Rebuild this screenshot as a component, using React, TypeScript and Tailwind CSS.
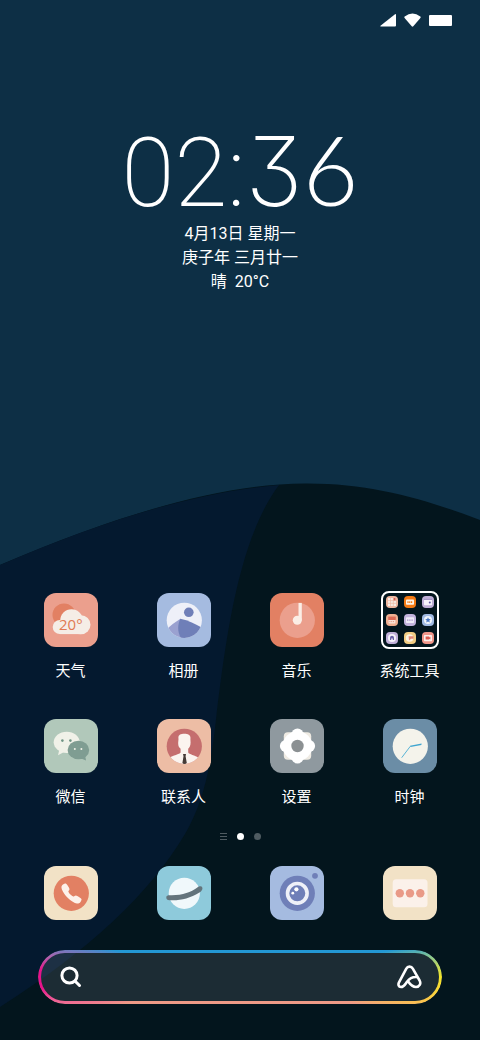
import React from "react";
import { IoCall } from "react-icons/io5";

type AppItem = {
   key: string;
   label: string;
   tile: string;
   art: React.ReactNode;
};

type MiniItem = {
   key: string;
   tile: string;
   art: React.ReactNode;
};

const WeatherArt = () => (
   <>
      <circle cx="20" cy="22" r="11.5" fill="#e28063" />
      <g fill="#f5ede6">
         <circle cx="27.5" cy="27.5" r="11.3" />
         <circle cx="37" cy="31.7" r="9.5" />
         <circle cx="15.8" cy="34" r="7.1" />
         <rect x="15.8" y="30" width="21.2" height="11.1" />
      </g>
      <text x="15" y="36.5" fontSize="15" fontWeight="500" fill="#e07a52" fontFamily="'Open Sans', sans-serif">
         20°
      </text>
   </>
);

const PhotosArt = () => (
   <>
      <clipPath id="photo-clip">
         <circle cx="27.3" cy="27.3" r="17.6" />
      </clipPath>
      <g clipPath="url(#photo-clip)">
         <rect width="54" height="54" fill="#eef0f8" />
         <circle cx="31.8" cy="19.3" r="4.8" fill="#6f7fb8" />
         <path d="M8 38C13 33 18 29 23.5 25.7L27 46L8 47Z" fill="#9aa1d0" />
         <path d="M23.3 25.7C32 27.5 39 31 46 35.5V47H25C20.5 40 20 33 23.3 25.7Z" fill="#6f7fb8" />
      </g>
   </>
);

const MusicArt = () => (
   <>
      <circle cx="27.3" cy="27.3" r="17.6" fill="#eb9f8d" />
      <circle cx="27.3" cy="27.3" r="4.5" fill="#fbeee6" />
      <rect x="28.5" y="9.9" width="3.3" height="17.4" fill="#fbeee6" />
   </>
);

const WechatArt = () => (
   <>
      <ellipse cx="22.7" cy="23.3" rx="13" ry="10.6" fill="#f0f1e8" />
      <path d="M15.5 30L14 36.3L21 32.5Z" fill="#f0f1e8" />
      <circle cx="18.4" cy="21.6" r="1.3" fill="#6f9384" />
      <circle cx="26.4" cy="21.6" r="1.3" fill="#6f9384" />
      <ellipse cx="34.4" cy="31" rx="10.8" ry="9.2" fill="#7f9d92" />
      <path d="M36 39L42 41.6L41 36Z" fill="#7f9d92" />
      <circle cx="30.8" cy="30" r="1" fill="#f0f1e8" />
      <circle cx="37.4" cy="30" r="1" fill="#f0f1e8" />
   </>
);

const ContactsArt = () => (
   <>
      <clipPath id="contact-clip">
         <circle cx="27.3" cy="27.3" r="17.6" />
      </clipPath>
      <g clipPath="url(#contact-clip)">
         <rect width="54" height="54" fill="#c56e6e" />
         <path
            d="M21.5 20C20.8 16 23.5 14.8 27.3 14.8C31.3 14.8 34 16 33.4 20L33.6 23.5C33.6 27 32.4 28.6 31.2 29.8V33.5C32 35.5 38 36 42 39V47H12V39C16 36 22.6 35.5 23.6 33.5V29.8C22 28.6 21 27 21.2 23.5Z"
            fill="#fbf4ef"
         />
         <path d="M26 35H29L28.6 37.3L29.8 44L27.6 46L25.4 44L26.5 37.3Z" fill="#453b37" />
      </g>
   </>
);

const SettingsArt = () => (
   <>
      <rect x="13.8" y="13.3" width="27.4" height="27.4" rx="4" fill="#efebe3" />
      <g fill="#ffffff">
         <circle cx="27.5" cy="27" r="14.8" />
         <circle cx="27.5" cy="15.4" r="6" />
         <circle cx="27.5" cy="38.6" r="6" />
         <circle cx="15.9" cy="27" r="6" />
         <circle cx="39.1" cy="27" r="6" />
      </g>
      <circle cx="27.5" cy="27" r="6.2" fill="#8b9092" />
   </>
);

const ClockArt = () => (
   <>
      <circle cx="27.3" cy="27.3" r="17.6" fill="#f4f3eb" />
      <path d="M27.3 27.3L18.7 38.7" stroke="#58b4d6" strokeWidth="1" />
      <path d="M27 26.8L38.6 24.4L38.4 26L27.6 28Z" fill="#3fa5d0" />
   </>
);

const PhoneArt = () => (
   <>
      <circle cx="27.3" cy="27.3" r="17.6" fill="#e28063" />
      <IoCall x="16" y="16" size={23} color="#fdf1ea" />
   </>
);

const PlanetArt = () => (
   <>
      <circle cx="27.3" cy="27.3" r="15.6" fill="#f0f8fb" />
      <path
         d="M9.3 31.5C9.3 29.5 11 29.2 13.5 29.3C25 29.6 34 26 40 21.8C42.5 19.9 44.6 19.9 45.3 21.5C46 23.6 44.5 25.3 42 26.8C33 32.5 22 35 12.5 34.2C10.3 34 9.2 33.2 9.3 31.5Z"
         fill="#64747c"
      />
   </>
);

const CameraArt = () => (
   <>
      <circle cx="27.3" cy="27.3" r="17.6" fill="#6f7fb8" />
      <circle cx="27.3" cy="27.3" r="9.8" fill="none" stroke="#eef0f8" strokeWidth="3.6" />
      <circle cx="26.4" cy="23.3" r="2.1" fill="#ffffff" />
      <circle cx="22.8" cy="27.2" r="1.4" fill="#ffffff" />
      <circle cx="45" cy="9.8" r="2.9" fill="#6f7fb8" />
   </>
);

const MessagesArt = () => (
   <>
      <rect x="9.7" y="13.3" width="34.8" height="28" rx="3.5" fill="#fbf1ea" />
      <circle cx="16.8" cy="27.3" r="4.2" fill="#e99a87" />
      <circle cx="27" cy="27.3" r="4.2" fill="#e99a87" />
      <circle cx="37.3" cy="27.3" r="4.2" fill="#e99a87" />
   </>
);

const topApps: AppItem[] = [
   { key: "weather", label: "天气", tile: "bg-[#eb9f8d]", art: <WeatherArt /> },
   { key: "photos", label: "相册", tile: "bg-[#a5bbe0]", art: <PhotosArt /> },
   { key: "music", label: "音乐", tile: "bg-[#e28063]", art: <MusicArt /> },
];

const bottomApps: AppItem[] = [
   { key: "wechat", label: "微信", tile: "bg-[#b1c8ba]", art: <WechatArt /> },
   { key: "contacts", label: "联系人", tile: "bg-[#edbda5]", art: <ContactsArt /> },
   { key: "settings", label: "设置", tile: "bg-[#8f999f]", art: <SettingsArt /> },
   { key: "clock", label: "时钟", tile: "bg-[#6b8da6]", art: <ClockArt /> },
];

const dockApps: AppItem[] = [
   { key: "phone", label: "电话", tile: "bg-[#f2e2c6]", art: <PhoneArt /> },
   { key: "browser", label: "浏览器", tile: "bg-[#8ecadb]", art: <PlanetArt /> },
   { key: "camera", label: "相机", tile: "bg-[#a5bbe0]", art: <CameraArt /> },
   { key: "messages", label: "信息", tile: "bg-[#f2e2c6]", art: <MessagesArt /> },
];

const folderItems: MiniItem[] = [
   {
      key: "calculator",
      tile: "bg-[#f0b9a2]",
      art: (
         <>
            <rect x="2" y="2" width="8" height="8" fill="#fbeee6" />
            <path d="M4.6 2V10M7.3 2V10M2 4.6H10M2 7.3H10" stroke="#f0b9a2" strokeWidth="0.7" />
            <rect x="7.6" y="2" width="2" height="2.4" fill="#d95f52" />
         </>
      ),
   },
   {
      key: "radio",
      tile: "bg-[#f57a14]",
      art: (
         <>
            <rect x="2" y="3.4" width="8" height="5.4" rx="0.8" fill="#fff3e6" />
            <path d="M3.4 6.1H8.6" stroke="#f57a14" strokeWidth="1.6" strokeDasharray="1.2 0.6" />
         </>
      ),
   },
   {
      key: "wallet",
      tile: "bg-[#bfaed6]",
      art: (
         <>
            <rect x="2" y="3.2" width="8" height="6" rx="0.8" fill="#f7f3fb" />
            <path d="M2 3.4H10" stroke="#8d7bb8" strokeWidth="0.8" />
            <circle cx="7.8" cy="6.5" r="1" fill="#5d55a0" />
         </>
      ),
   },
   {
      key: "calendar",
      tile: "bg-[#f0b092]",
      art: (
         <>
            <rect x="2.6" y="3" width="6.8" height="6.6" rx="0.8" fill="#fbe3d8" />
            <rect x="2.2" y="2.6" width="7.6" height="3.4" fill="#dd6a55" />
            <path d="M3.4 7.6H8.6" stroke="#e69a84" strokeWidth="1" strokeDasharray="1 0.8" />
         </>
      ),
   },
   {
      key: "recorder",
      tile: "bg-[#c3b3dc]",
      art: (
         <>
            <rect x="2" y="3.2" width="8" height="5.8" rx="0.8" fill="#f0ebf7" />
            <path d="M3 6.1H9" stroke="#a793c9" strokeWidth="1.4" strokeDasharray="1.4 0.8" />
         </>
      ),
   },
   {
      key: "store",
      tile: "bg-[#a0b9e2]",
      art: (
         <>
            <circle cx="6" cy="6" r="4" fill="#f1f5fc" />
            <path d="M6 3.2L6.8 5.1L8.8 5.2L7.3 6.5L7.8 8.5L6 7.4L4.2 8.5L4.7 6.5L3.2 5.2L5.2 5.1Z" fill="#4a78c4" />
         </>
      ),
   },
   {
      key: "backup",
      tile: "bg-[#c0afd8]",
      art: (
         <>
            <circle cx="6" cy="6" r="4" fill="#f7f3fb" />
            <path d="M4 8V5.8A2 2 0 0 1 8 5.8V8H6.8V6.4H5.2V8Z" fill="#6b62a8" />
         </>
      ),
   },
   {
      key: "files",
      tile: "bg-[#f2cd84]",
      art: (
         <>
            <circle cx="5.6" cy="6" r="3.8" fill="#fdf3e0" />
            <path d="M4.6 4.2H9.6V6.8H7L5 8.6Z" fill="#e58a78" />
         </>
      ),
   },
   {
      key: "video",
      tile: "bg-[#f0968a]",
      art: (
         <>
            <rect x="2" y="3" width="8" height="6.2" rx="0.6" fill="#fdeeea" />
            <path d="M3.6 4.6H7.2V5.4L8.4 4.8V7.4L7.2 6.8V7.6H3.6Z" fill="#dc5a50" />
         </>
      ),
   },
];

const AppTile = ({ item }: { item: AppItem }) => (
   <span className={`block size-[54px] overflow-hidden rounded-xl ${item.tile}`}>
      <svg viewBox="0 0 54 54" className="size-full" aria-hidden="true">
         {item.art}
      </svg>
   </span>
);

const AppIcon = ({ item }: { item: AppItem }) => (
   <button type="button" className="flex flex-col items-center gap-3">
      <AppTile item={item} />
      <span className="text-[15px] leading-6">{item.label}</span>
   </button>
);

const Folder = () => (
   <button type="button" className="flex flex-col items-center gap-3">
      <span className="-m-0.5 grid size-[58px] grid-cols-3 gap-1.5 rounded-lg border-2 border-white bg-[#03151d] p-[3px]">
         {folderItems.map((item) => (
            <span key={item.key} className={`block size-3 rounded-sm ${item.tile}`}>
               <svg viewBox="0 0 12 12" className="size-full" aria-hidden="true">
                  {item.art}
               </svg>
            </span>
         ))}
      </span>
      <span className="text-[15px] leading-6">系统工具</span>
   </button>
);

const Wallpaper = () => (
   <svg
      viewBox="0 0 480 1040"
      preserveAspectRatio="none"
      className="absolute inset-0 -z-10 size-full"
      aria-hidden="true"
   >
      <rect width="480" height="1040" fill="#0d2f45" />
      <path d="M0 565C120 514 220 484 305 483.500C370 483 425 499 480 520V1040H0Z" fill="#03151d" />
      <path
         d="M0 565C105 520 195 492 279 485C238 540 226 640 217 710C212 760 205 800 185 834C150 893 90 950 0 1007Z"
         fill="#04192f"
      />
   </svg>
);

const StatusBar = () => (
   <header className="flex h-10 items-center justify-end gap-2 px-7">
      <svg viewBox="0 0 16 14" className="h-3.5 w-4" fill="#fff" aria-label="信号">
         <path d="M15 1.200Q16 .5 16 1.700V12.500Q16 13.500 15 13.500H1Q-.2 13.500 .8 12.600Z" />
      </svg>
      <svg viewBox="0 0 17 14" className="h-3.5 w-[17px]" fill="#fff" aria-label="无线网络">
         <path d="M.7 3.600Q8.500-2.600 16.300 3.600Q17 4.200 16.400 5L9.300 13.300Q8.500 14 7.700 13.300L.6 5Q0 4.200 .7 3.600Z" />
      </svg>
      <span className="h-[11px] w-[23px] rounded-[1px] bg-white" />
   </header>
);

const SearchBar = () => (
   <form className="relative mx-[38px] flex h-[54px] items-center justify-between rounded-full bg-white/10 pr-5 pl-[22px]">
      <span className="pointer-events-none absolute inset-0 rounded-full bg-[conic-gradient(#2398d4_0deg,#2398d4_80deg,#8cc98f_84deg,#f5e62a_90deg,#fbc748_97deg,#ee9a86_103deg,#ee9a86_257deg,#ef5f96_263deg,#e5138a_267deg,#e5138a_272deg,#b062ad_276deg,#2398d4_282deg)] p-[3px] [mask:linear-gradient(#fff_0_0)_content-box_exclude,linear-gradient(#fff_0_0)]" />
      <button type="submit" aria-label="搜索">
         <svg viewBox="0 0 22 22" className="size-[22px]" fill="none" stroke="#fff" strokeWidth="3" strokeLinecap="round">
            <circle cx="9.500" cy="9.500" r="7.600" />
            <path d="M15.200 15.200L19.500 19.500" />
         </svg>
      </button>
      <input type="text" aria-label="搜索内容" className="h-full min-w-0 flex-1 bg-transparent px-3 outline-none" />
      <button type="button" aria-label="助手">
         <svg viewBox="0 0 25 24" className="h-6 w-[25px]" fill="none" stroke="#fff" strokeWidth="2.6" strokeLinecap="round" strokeLinejoin="round">
            <path d="M20.500 12.200C16 11.500 12.500 13.500 9.800 17C8 19.500 6.800 22 4 22C1.500 22 .9 19.500 2 17.300L9.300 3.600C10.700 .9 14.300 .9 15.800 3.600L22.600 15.500C24.300 18.700 22.500 22 19 22C15.500 22 13.200 19.500 10.800 16" />
         </svg>
      </button>
   </form>
);

const App = () => {
   return (
      <main className="relative isolate flex min-h-screen flex-col text-white font-[Roboto,'Noto_Sans_CJK_SC',sans-serif]">
         <Wallpaper />
         <StatusBar />

         <section className="flex flex-col items-center pt-20">
            {/* flat-topped 3 comes from Inter, straight-stemmed 6 from Lato */}
            <time className="text-[96px] leading-[98px] font-extralight font-[Roboto,sans-serif]">
               02:
               <span className="font-[Inter,sans-serif] [font-feature-settings:'cv09']">3</span>
               <span className="font-light font-[Lato,sans-serif]">6</span>
            </time>
            <p className="text-base leading-6">4月13日 星期一</p>
            <p className="text-base leading-6">庚子年 三月廿一</p>
            <p className="text-base leading-6 whitespace-pre">晴  20°C</p>
         </section>

         <section className="mt-auto grid grid-cols-4 gap-y-9 px-3.5">
            {topApps.map((item) => (
               <AppIcon key={item.key} item={item} />
            ))}
            <Folder />
            {bottomApps.map((item) => (
               <AppIcon key={item.key} item={item} />
            ))}
         </section>

         <nav className="mt-6 flex items-center justify-center gap-2.5" aria-label="页面">
            <button type="button" aria-label="负一屏" className="flex w-[7px] flex-col gap-0.5">
               <span className="h-px bg-white/30" />
               <span className="h-px bg-white/30" />
               <span className="h-px bg-white/30" />
            </button>
            <button type="button" aria-label="第一页" className="size-[7px] rounded-full bg-white" />
            <button type="button" aria-label="第二页" className="size-[7px] rounded-full bg-white/30" />
         </nav>

         <section className="mt-[26px] grid grid-cols-4 px-3.5">
            {dockApps.map((item) => (
               <button key={item.key} type="button" aria-label={item.label} className="flex justify-center">
                  <AppTile item={item} />
               </button>
            ))}
         </section>

         <div className="pt-[30px] pb-9">
            <SearchBar />
         </div>
      </main>
   );
};

export default App;
